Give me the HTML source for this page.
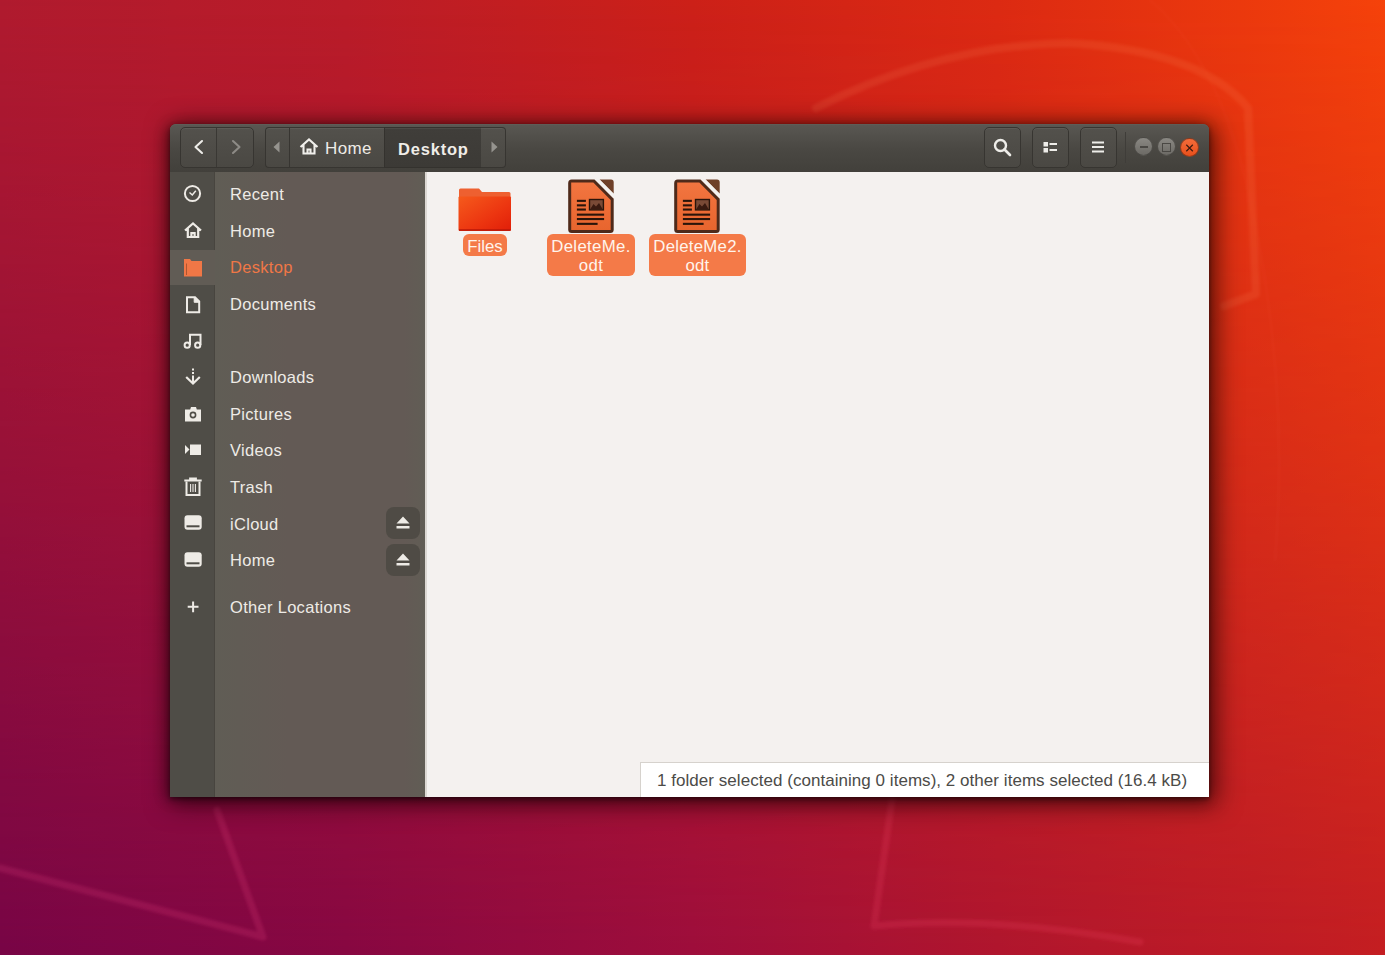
<!DOCTYPE html>
<html><head><meta charset="utf-8">
<style>
*{margin:0;padding:0;box-sizing:border-box}
html,body{width:1385px;height:955px;overflow:hidden}
body{position:relative;font-family:"Liberation Sans",sans-serif;
background:linear-gradient(to right,#780546 0%,#880842 25%,#9e0e3c 50%,#b0162e 72%,#c41e22 100%);}
#bgtop{left:0;top:0;width:1385px;height:955px;background:linear-gradient(to right,#b01a2e 0%,#ba1c28 25%,#cc2018 50%,#dc2a12 72%,#f5420a 100%);-webkit-mask-image:linear-gradient(to bottom,#000 0%,rgba(0,0,0,0.55) 50%,transparent 100%);mask-image:linear-gradient(to bottom,#000 0%,rgba(0,0,0,0.55) 50%,transparent 100%)}
div,svg{position:absolute}
#win{left:170px;top:124px;width:1039px;height:673px;border-radius:6px 6px 0 0;
box-shadow:0 2px 5px rgba(0,0,0,0.45),-3px 2px 14px rgba(0,0,0,0.3),4px 4px 24px 4px rgba(20,0,0,0.6);background:#615b55}
#hb{left:170px;top:124px;width:1039px;height:48px;border-radius:6px 6px 0 0;background:linear-gradient(#595752,#4a4843 50%,#42403b);border-top:1px solid #5e5c57}
.btn{top:127px;height:41px;border:1px solid #373531;border-radius:5px;background:linear-gradient(#53514c,#4a4843);box-shadow:inset 0 1px 0 rgba(255,255,255,0.06)}
#side{left:215px;top:172px;width:210px;height:625px;background:linear-gradient(to right,#605d55 0%,#635a55 35%,#635a55 90%,#615d55 100%)}
#icol{left:170px;top:172px;width:45px;height:625px;background:#4f4d47;border-right:1px solid #48453f}
#content{left:425px;top:172px;width:784px;height:625px;background:#f4f1ef;border-left:2px solid #dcd8d3}
.row{left:230px;font-size:16.5px;line-height:20px;color:#eeebe6;letter-spacing:0.3px;white-space:nowrap}
#status{left:640px;top:762px;width:569px;height:35px;background:#fff;border-top:1px solid #d6d2cd;border-left:1px solid #d6d2cd;font-size:17px;color:#4c4b48;white-space:nowrap}
.lbl{background:#f47a48;border-radius:6px;color:#fff4ec;font-size:16.8px;text-align:center;line-height:19px}
.wc{width:19px;height:19px;border-radius:50%;top:137.5px}
</style></head><body>
<div id="bgtop"></div>
<svg width="1385" height="955" viewBox="0 0 1385 955" style="left:0;top:0"><defs><filter id="blr" x="-10%" y="-10%" width="120%" height="120%"><feGaussianBlur stdDeviation="1.5"/></filter></defs>
  <g fill="none" stroke-linecap="round" stroke-linejoin="round" filter="url(#blr)">
    <path d="M816 108 Q 940 45 1067 43 Q 1200 50 1248 108 L 1256 294 L 1224 306" stroke="#ff9060" stroke-opacity="0.13" stroke-width="8"/>
    <path d="M1150 0 Q 1220 60 1250 200 Q 1290 380 1275 560" stroke="#ff9060" stroke-opacity="0.05" stroke-width="2"/>
    <path d="M0 868 L 263 937 L 217 810" stroke="#ff4a90" stroke-opacity="0.16" stroke-width="7"/>
    <path d="M892 800 L 874 926 Q 990 915 1140 942" stroke="#ff4a70" stroke-opacity="0.16" stroke-width="7"/>
  </g>
</svg>
<div id="win"></div>
<div id="hb"></div>
<!-- nav buttons -->
<div class="btn" style="left:180px;width:74px"></div>
<div style="left:216px;top:128px;width:1px;height:39px;background:#3a3834"></div>
<svg style="left:186px;top:134px" width="24" height="26" viewBox="0 0 24 26"><path d="M16 7 L9.5 13 L16 19" fill="none" stroke="#eeede9" stroke-width="2.1" stroke-linecap="round" stroke-linejoin="round"/></svg>
<svg style="left:223px;top:134px" width="24" height="26" viewBox="0 0 24 26"><path d="M10 7 L16.5 13 L10 19" fill="none" stroke="#8d8b86" stroke-width="2.1" stroke-linecap="round" stroke-linejoin="round"/></svg>
<!-- path bar -->
<div class="btn" style="left:265px;width:25px;border-right:none;border-radius:4px 0 0 4px"></div>
<svg style="left:270px;top:139px" width="14" height="16" viewBox="0 0 14 16"><path d="M9.5 2.5 L3.5 8 L9.5 13.5 Z" fill="#96948f"/></svg>
<div class="btn" style="left:289px;width:96px;border-radius:0"></div>
<svg style="left:297px;top:136px" width="24" height="20" viewBox="0 0 24 20"><path d="M3.5 11 L12 3.5 L20.5 11 M6.5 9 V17.5 H17.5 V9 M10.5 17.5 V13.5 H13.5 V17.5" fill="none" stroke="#f0efeb" stroke-width="2.1" stroke-linejoin="miter"/></svg>
<div class="row" style="left:325px;top:139px;color:#eeebe6;font-size:17px;letter-spacing:0.4px">Home</div>
<div class="btn" style="left:384px;width:98px;border-radius:0;background:linear-gradient(#403e3a,#3c3a36);border-color:#34322e"></div>
<div class="row" style="left:398px;top:139px;font-weight:bold;color:#f0ede8;letter-spacing:0.8px">Desktop</div>
<div class="btn" style="left:481px;width:25px;border-left:none;border-radius:0 4px 4px 0"></div>
<svg style="left:487px;top:139px" width="14" height="16" viewBox="0 0 14 16"><path d="M4.5 2.5 L10.5 8 L4.5 13.5 Z" fill="#96948f"/></svg>
<!-- right buttons -->
<div class="btn" style="left:984px;width:37px"></div>
<svg style="left:990px;top:135px" width="24" height="24" viewBox="0 0 24 24"><circle cx="10.5" cy="10.5" r="5.5" fill="none" stroke="#eeede9" stroke-width="2.4"/><path d="M14.5 14.5 L20 20" stroke="#eeede9" stroke-width="2.6" stroke-linecap="round"/></svg>
<div class="btn" style="left:1031.5px;width:37px"></div>
<svg style="left:1038px;top:135px" width="24" height="24" viewBox="0 0 24 24" fill="#eeede9"><rect x="5.5" y="7" width="4.5" height="4.5"/><rect x="5.5" y="13" width="4.5" height="4.5"/><rect x="11.5" y="8" width="7.5" height="2"/><rect x="11.5" y="14" width="7.5" height="2"/></svg>
<div class="btn" style="left:1079.5px;width:37px"></div>
<svg style="left:1086px;top:135px" width="24" height="24" viewBox="0 0 24 24" fill="#eeede9"><rect x="6" y="6.5" width="12" height="2"/><rect x="6" y="11" width="12" height="2"/><rect x="6" y="15.5" width="12" height="2"/></svg>
<div style="left:1125px;top:132px;width:1px;height:31px;background:#3f3d39"></div>
<div class="wc" style="left:1134.2px;top:137.3px;width:19px;height:19px;border:1px solid rgba(45,43,40,0.55);background:linear-gradient(#8a8883,#6c6a65)"></div>
<div style="left:1139.7px;top:146.3px;width:8.5px;height:1.6px;background:#4a4844"></div>
<div class="wc" style="left:1157.1px;top:137.3px;width:19px;height:19px;border:1px solid rgba(45,43,40,0.55);background:linear-gradient(#8a8883,#6c6a65)"></div>
<div style="left:1162.3px;top:143.2px;width:8.4px;height:8.4px;border:1.5px solid #4a4844"></div>
<div class="wc" style="left:1180px;border:1px solid rgba(60,30,20,0.5);background:linear-gradient(#f46c3a,#e8501c)"></div>
<svg style="left:1180px;top:137.5px" width="19" height="19" viewBox="0 0 19 19"><path d="M6.3 6.8 L12.8 13.2 M12.8 6.8 L6.3 13.2" stroke="#3e1a10" stroke-width="1.2"/></svg>
<!-- sidebar -->
<div id="side"></div>
<div id="icol"></div>
<div style="left:170px;top:249.5px;width:45px;height:35px;background:#615c55"></div>
<!-- sidebar icons -->
<svg style="left:182px;top:183px" width="22" height="22" viewBox="0 0 22 22"><circle cx="10.5" cy="10.5" r="7.6" fill="none" stroke="#eeebe6" stroke-width="2"/><path d="M7.5 9.5 L10.3 12 L13.8 7.8" fill="none" stroke="#eeebe6" stroke-width="1.5"/></svg>
<svg style="left:182px;top:220px" width="22" height="22" viewBox="0 0 22 22"><path d="M3 10.5 L11 3.5 L19 10.5 M5.8 8.6 V17 H16.2 V8.6 M9.4 17 V13 H12.6 V17" fill="none" stroke="#eeebe6" stroke-width="2.2"/></svg>
<svg style="left:182px;top:256px" width="22" height="22" viewBox="0 0 22 22"><path d="M2 3 H8 L9.5 5 H20 V20.5 H2 Z" fill="#f07746"/><path d="M4.5 7.5 V19" stroke="#b05630" stroke-width="1"/></svg>
<svg style="left:182px;top:293px" width="22" height="22" viewBox="0 0 22 22"><path d="M5 4.3 H13 L17.2 8.5 V19.2 H5 Z" fill="none" stroke="#eeebe6" stroke-width="2" stroke-linejoin="miter"/><path d="M12.2 4.3 V9.3 H17.2" fill="#eeebe6" stroke="#eeebe6" stroke-width="1"/></svg>
<svg style="left:182px;top:330px" width="22" height="22" viewBox="0 0 22 22"><path d="M8 15 V4.8 H18.5 V15" fill="none" stroke="#eeebe6" stroke-width="2"/><circle cx="5.2" cy="15.2" r="2.6" fill="none" stroke="#eeebe6" stroke-width="2"/><circle cx="15.7" cy="15.2" r="2.6" fill="none" stroke="#eeebe6" stroke-width="2"/></svg>
<svg style="left:182px;top:366px" width="22" height="22" viewBox="0 0 22 22"><path d="M11 2.5 V4.5 M11 6 V8 M11 9.5 V16" stroke="#eeebe6" stroke-width="2"/><path d="M4.2 11 L11 17.5 L17.8 11" fill="none" stroke="#eeebe6" stroke-width="2.2"/></svg>
<svg style="left:182px;top:403px" width="22" height="22" viewBox="0 0 22 22"><path d="M3 6.5 H8.2 L9 4 H14 L14.8 6.5 H19 V18.5 H3 Z" fill="#eeebe6"/><circle cx="11" cy="12" r="3.4" fill="#4f4d47"/><circle cx="11" cy="12" r="1.8" fill="#eeebe6"/></svg>
<svg style="left:182px;top:439px" width="22" height="22" viewBox="0 0 22 22"><path d="M3 6 L7.5 10.5 L3 15 Z" fill="#eeebe6"/><rect x="8" y="5.5" width="11" height="10.5" fill="#eeebe6"/></svg>
<svg style="left:182px;top:476px" width="22" height="22" viewBox="0 0 22 22"><path d="M2.3 4.5 H19.7 M8 4 V2.5 H14 V4" fill="none" stroke="#eeebe6" stroke-width="1.8"/><path d="M4.5 5.5 V19 H17.5 V5.5" fill="none" stroke="#eeebe6" stroke-width="2"/><path d="M8.6 8 V16 M11 8 V16 M13.4 8 V16" stroke="#eeebe6" stroke-width="1.1"/></svg>
<svg style="left:182px;top:512px" width="22" height="22" viewBox="0 0 22 22"><rect x="2.5" y="3.3" width="17.2" height="14.5" rx="3" fill="#eeebe6"/><rect x="4.5" y="13.3" width="13" height="2" fill="#4f4d47"/></svg>
<svg style="left:182px;top:549px" width="22" height="22" viewBox="0 0 22 22"><rect x="2.5" y="3.3" width="17.2" height="14.5" rx="3" fill="#eeebe6"/><rect x="4.5" y="13.3" width="13" height="2" fill="#4f4d47"/></svg>
<svg style="left:182px;top:596px" width="22" height="22" viewBox="0 0 22 22"><path d="M5.7 10.8 H16.5 M11.1 5.4 V16.2" stroke="#eeebe6" stroke-width="2"/></svg>
<!-- sidebar labels -->
<div class="row" style="top:184.2px">Recent</div>
<div class="row" style="top:220.8px">Home</div>
<div class="row" style="top:257.4px;color:#f07746">Desktop</div>
<div class="row" style="top:294px">Documents</div>
<div class="row" style="top:367.2px">Downloads</div>
<div class="row" style="top:403.8px">Pictures</div>
<div class="row" style="top:440.4px">Videos</div>
<div class="row" style="top:477px">Trash</div>
<div class="row" style="top:513.6px">iCloud</div>
<div class="row" style="top:550.2px">Home</div>
<div class="row" style="top:596.5px">Other Locations</div>
<!-- eject buttons -->
<div style="left:386px;top:507px;width:34px;height:32px;border-radius:8px;background:#4f4b45"></div>
<div style="left:386px;top:544px;width:34px;height:32px;border-radius:8px;background:#4f4b45"></div>
<svg style="left:392px;top:512px" width="22" height="22" viewBox="0 0 22 22"><path d="M4.5 11.5 L11 4.5 L17.5 11.5 Z M4.5 14 H17.5 V16.5 H4.5 Z" fill="#eeebe6"/></svg>
<svg style="left:392px;top:549px" width="22" height="22" viewBox="0 0 22 22"><path d="M4.5 11.5 L11 4.5 L17.5 11.5 Z M4.5 14 H17.5 V16.5 H4.5 Z" fill="#eeebe6"/></svg>
<div id="content"></div>
<!-- files -->
<svg style="left:456px;top:186px" width="58" height="48" viewBox="0 0 58 48">
  <defs><linearGradient id="fg" x1="0" y1="0" x2="1" y2="1"><stop offset="0" stop-color="#f55a1c"/><stop offset="0.6" stop-color="#ec3510"/><stop offset="1" stop-color="#e01e08"/></linearGradient></defs>
  <path d="M3 4 Q3 2.5 4.5 2.5 H23 L26 6 H53 Q54.5 6 54.5 7.5 V12 H3 Z" fill="#ee6030"/>
  <path d="M2.5 11.5 Q2.5 10.5 3.5 10.5 H54 Q55 10.5 55 11.5 V43.5 Q55 45 53.5 45 H4 Q2.5 45 2.5 43.5 Z" fill="url(#fg)"/>
  <path d="M3 44 H54.5" stroke="#b8180a" stroke-width="1.4"/>
</svg>
<div class="lbl" style="left:463px;top:234px;width:44px;height:22px;line-height:22px;padding-top:2px">Files</div>
<svg style="left:566px;top:177px" width="50" height="58" viewBox="0 0 50 58">
  <defs><linearGradient id="dg566" x1="0" y1="0" x2="0" y2="1"><stop offset="0" stop-color="#f27540"/><stop offset="1" stop-color="#e8652e"/></linearGradient></defs>
  <path d="M2.2 6 Q2.2 2.5 5.7 2.5 H28.5 L47.7 21.7 V52.5 Q47.7 56 44.2 56 H5.7 Q2.2 56 2.2 52.5 Z" fill="#4e2a1a"/>
  <path d="M5.2 5.5 H27.3 L44.7 22.9 V53 H5.2 Z" fill="url(#dg566)"/>
  <path d="M33.5 2.5 H45 Q47.7 2.5 47.7 5.2 V16.7 Z" fill="#6e4028"/>
  <path d="M30.3 0.8 L49.4 19.9" stroke="#f3f1ef" stroke-width="2.2"/>
  <g fill="#2a140a"><rect x="10.9" y="22.8" width="9" height="2.1"/><rect x="10.9" y="27.3" width="9" height="2.1"/><rect x="10.9" y="31.5" width="9" height="2.1"/><rect x="10.9" y="36.6" width="27.2" height="2.1"/><rect x="10.9" y="41" width="27.2" height="2.1"/><rect x="10.9" y="45.8" width="20.7" height="2.1"/></g>
  <rect x="22.8" y="21.8" width="15.3" height="11.8" fill="#2a140a"/><rect x="24.2" y="23.2" width="12.5" height="9" fill="#7a4a36"/><path d="M24.2 32.2 L27.5 27 L30 29.5 L33 26 L36.7 32.2 Z" fill="#3a1a10"/>
</svg>
<div class="lbl" style="left:547px;top:234px;width:88px;height:42px;padding-top:3px;letter-spacing:0.35px">DeleteMe.<br>odt</div>
<svg style="left:672px;top:177px" width="50" height="58" viewBox="0 0 50 58">
  <defs><linearGradient id="dg672" x1="0" y1="0" x2="0" y2="1"><stop offset="0" stop-color="#f27540"/><stop offset="1" stop-color="#e8652e"/></linearGradient></defs>
  <path d="M2.2 6 Q2.2 2.5 5.7 2.5 H28.5 L47.7 21.7 V52.5 Q47.7 56 44.2 56 H5.7 Q2.2 56 2.2 52.5 Z" fill="#4e2a1a"/>
  <path d="M5.2 5.5 H27.3 L44.7 22.9 V53 H5.2 Z" fill="url(#dg672)"/>
  <path d="M33.5 2.5 H45 Q47.7 2.5 47.7 5.2 V16.7 Z" fill="#6e4028"/>
  <path d="M30.3 0.8 L49.4 19.9" stroke="#f3f1ef" stroke-width="2.2"/>
  <g fill="#2a140a"><rect x="10.9" y="22.8" width="9" height="2.1"/><rect x="10.9" y="27.3" width="9" height="2.1"/><rect x="10.9" y="31.5" width="9" height="2.1"/><rect x="10.9" y="36.6" width="27.2" height="2.1"/><rect x="10.9" y="41" width="27.2" height="2.1"/><rect x="10.9" y="45.8" width="20.7" height="2.1"/></g>
  <rect x="22.8" y="21.8" width="15.3" height="11.8" fill="#2a140a"/><rect x="24.2" y="23.2" width="12.5" height="9" fill="#7a4a36"/><path d="M24.2 32.2 L27.5 27 L30 29.5 L33 26 L36.7 32.2 Z" fill="#3a1a10"/>
</svg>
<div class="lbl" style="left:649px;top:234px;width:97px;height:42px;padding-top:3px;letter-spacing:0.25px">DeleteMe2.<br>odt</div>
<!-- status -->
<div id="status"><div style="left:16px;top:8px;line-height:20px;letter-spacing:0.04px">1 folder selected (containing 0 items), 2 other items selected (16.4 kB)</div></div>
</body></html>
